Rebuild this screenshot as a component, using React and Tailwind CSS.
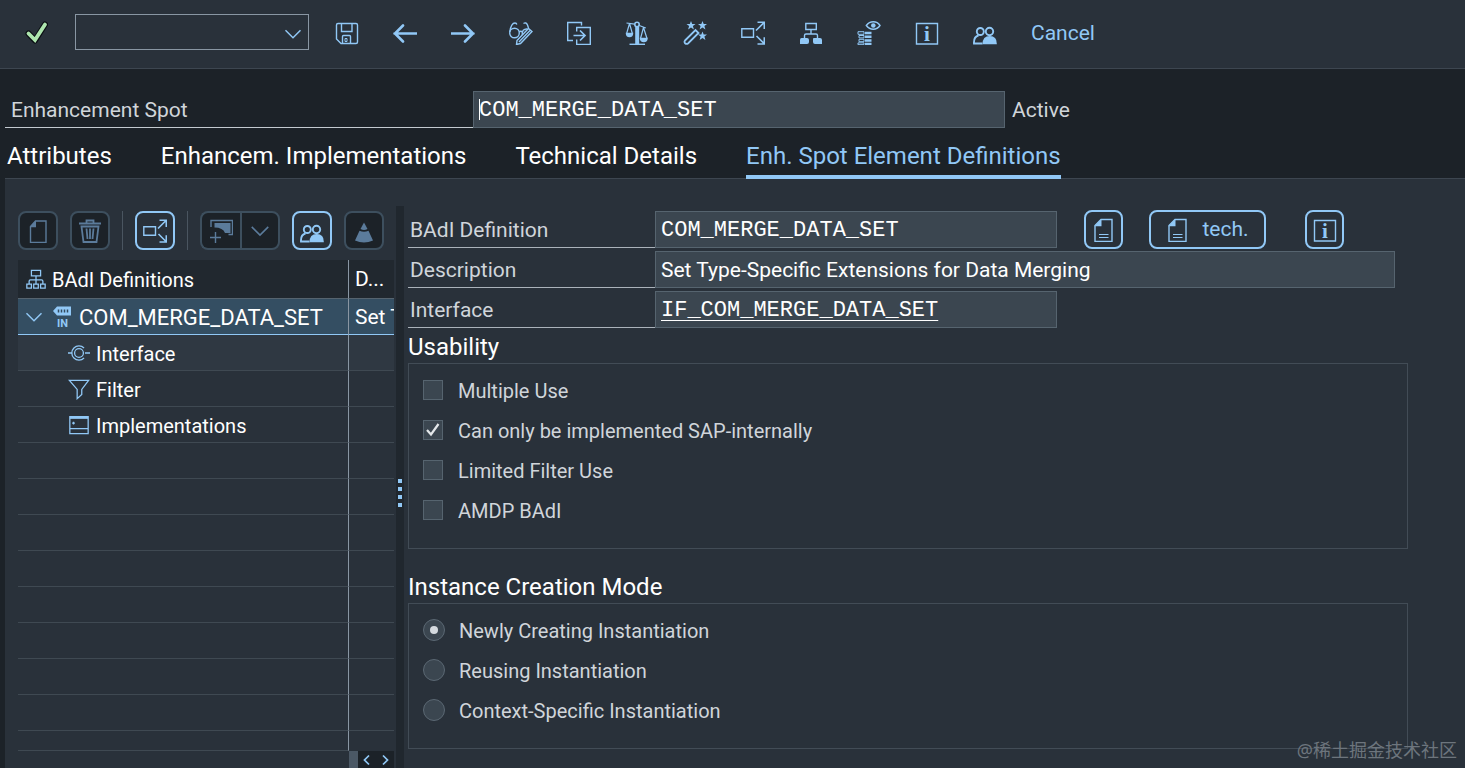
import { useState } from 'react';

const Icon = ({ children, className = 'size-6' }) => (
  <svg
    viewBox="0 0 24 24"
    className={className}
    fill="none"
    stroke="currentColor"
    strokeWidth="1.4"
    aria-hidden="true"
  >
    {children}
  </svg>
);

const SaveIcon = () => (
  <Icon>
    <path d="M3 2.500h18q1.500 0 1.500 1.500v17q0 1.500-1.500 1.500H6L1.500 18V4q0-1.500 1.500-1.500z" />
    <path d="M6.500 2.500v8h10.500v-8M7.500 22.500v-7q0-1 1-1h6q1 0 1 1v7" />
    <path d="M10 17.500h2v3h-2z" strokeWidth="1" />
  </Icon>
);

const BackIcon = () => (
  <Icon>
    <path d="M1.5 12.500h22M10 4.500l-8 8 8 8" strokeWidth="2.600" strokeLinecap="round" />
  </Icon>
);

const ForwardIcon = () => (
  <Icon>
    <path d="M.5 12.500h22M14 4.500l8 8-8 8" strokeWidth="2.600" strokeLinecap="round" />
  </Icon>
);

const GlassesPencilIcon = () => (
  <Icon>
    <circle cx="5.500" cy="12" r="4.800" />
    <path d="M.8 11C1.500 6 3 2 6 2q1.500 0 1.800 1.500M10.300 11q1.500-1.500 3 0M13.300 14C12.500 10 15 7.500 18.500 8M14.500 2.500Q17 .8 18.500 4l1 3" />
    <path d="M8 19.500 19.500 7.500l3.500 3L11.500 22.500 7.500 23.500zM10 21l11-11.500" />
  </Icon>
);

const CopyToIcon = () => (
  <Icon>
    <path d="M6 19.500H.7V1.500h13.800v3M9.700 10.500V6.500h13.600v17H9.700v-5" />
    <path d="M6.500 14.500h11M13 9.500l5 5-5 5" strokeWidth="1.700" />
  </Icon>
);

const ScaleIcon = () => (
  <Icon>
    <path d="M12.200 6v17" strokeWidth="4" />
    <path d="M4.500 23.300h15.500" />
    <circle cx="12" cy="3.500" r="2.200" strokeWidth="1.600" />
    <path d="M1.500 2l8 1.200M14.300 4.500l6.500 2.500M4.500 2.500l-3 10.500M4.500 2.500L7.500 13M18.500 6.500l-3 11M18.500 6.500l3.500 11" strokeWidth="1.200" />
    <path d="M1.500 12.500h6q0 3-3 3t-3-3zM15.500 17.500h6.500q0 3-3.200 3t-3.300-3z" fill="currentColor" />
  </Icon>
);

const WandIcon = () => (
  <Icon>
    <path d="M2 19.500 12.500 9l3 3L5 22.500q-1.500 1-3-.3-1-1.400 0-2.700z" strokeWidth="1.800" />
    <path
      stroke="none"
      fill="currentColor"
      d="M8 0l1.200 3H12.500L9.900 5l1 3.500L8 6.500 5.100 8.500l1-3.500L3.500 3h3.300zM19.500 0l1.200 3H24L21.400 5l1 3.500-2.900-2-2.900 2 1-3.500L15 3h3.300zM19.500 10.500l1.200 3H24l-2.600 2 1 3.500-2.900-2-2.900 2 1-3.500-2.600-2h3.300z"
    />
  </Icon>
);

const ExpandIcon = ({ className }) => (
  <Icon className={className}>
    <path d="M.8 7.700h11.700v8.500H.8z" />
    <path d="M15 9.500l8-8M16.500 1.200h6.800V8M15.500 15l7.500 7.500M16.500 23h6.800v-6.800" strokeWidth="1.600" />
  </Icon>
);

const HierarchyIcon = () => (
  <Icon>
    <path d="M6.800 2.500h10.500v6H6.800zM12 8.500V13M5.500 17v-2.500Q5.500 13 7 13h10q1.500 0 1.500 1.500V17" />
    <path d="M2.500 17H8q2 0 2 2v2q0 2-2 2H1V19q0-2 1.500-2zM14.500 17H21q2 0 2 2v4h-7q-2 0-2-2v-2q0-2 .5-2z" fill="currentColor" stroke="none" />
  </Icon>
);

const WatchIcon = () => (
  <Icon>
    <path d="M9.300 4.500Q12 .8 16.300.8t6.700 3.700Q20.500 8.200 16.300 8.200T9.300 4.500z" />
    <circle cx="16.300" cy="4.500" r="2.300" fill="currentColor" stroke="none" />
    <path d="M8 12h6.500M8 15.800h6.500M8 19.500h6.500M8 23h6.500" strokeWidth="2.600" />
    <path d="M1 10.700h6v2.600H1zM2 14.500h5v2.400H2zM2 18.300h5v2.400H2zM1 21.900h6v1.800H1z" strokeWidth="1" />
  </Icon>
);

const InfoIcon = () => (
  <Icon>
    <path d="M1.500 2.500h21v20.500h-21z" />
    <text
      x="12"
      y="19.500"
      textAnchor="middle"
      fontSize="21"
      fontFamily="Liberation Serif, serif"
      fontWeight="700"
      fill="currentColor"
      stroke="none"
    >
      i
    </text>
  </Icon>
);

const PeopleIcon = () => (
  <Icon>
    <circle cx="7.300" cy="10.500" r="3.500" strokeWidth="1.900" />
    <path d="M9.500 22.500H1Q.6 15.500 5.500 14.500" strokeWidth="1.900" />
    <circle cx="16.500" cy="10.500" r="3.700" strokeWidth="1.900" />
    <path d="M9.500 23.300q0-8.300 7.300-8.300t7 8.300z" fill="currentColor" stroke="none" />
  </Icon>
);

const PageIcon = () => (
  <Icon>
    <path d="M9.500 2H20v21.500H4.500V7.500z" />
    <path d="M3.800 8.200 10 1.500v6.700z" fill="currentColor" stroke="none" />
  </Icon>
);

const DocIcon = () => (
  <Icon>
    <path d="M9 1.500h11v22H3v-16z" />
    <path d="M2.500 8.300 9.500 1v7.300z" fill="currentColor" stroke="none" />
    <path d="M7 16.500h9.500M7 19.500h9.500" strokeWidth="1.200" />
  </Icon>
);

const TrashIcon = () => (
  <Icon>
    <path d="M1 4.500h22M8.500 4V1.500h7V4" strokeWidth="1.800" />
    <path d="M3.500 7.500h17L18.500 23h-13zM8.500 9.500l1 10.500M12 9.500V20M15.500 9.500 14.500 20" strokeWidth="1.800" />
  </Icon>
);

const AddNodeIcon = () => (
  <Icon>
    <path d="M2 8V1.500h21.500V15.500h-4" />
    <path d="M5.500 4h16v10H16Q14 8.500 5.500 8.500z" fill="currentColor" stroke="none" />
    <path d="M6.500 13v11M1 18.500h11" />
  </Icon>
);

const ConeIcon = () => (
  <Icon>
    <path d="M12 3.500 15.500 10q-3.500 1.800-7 0z" fill="currentColor" stroke="none" />
    <path d="M7.500 11.700q4.500 2 9 0L21 21.500Q12 25.500 3 21.500z" fill="currentColor" stroke="none" />
  </Icon>
);

const ChevronDown = ({ className }) => (
  <Icon className={className}>
    <path d="M3 7.500l9 9 9-9" strokeWidth="1.700" />
  </Icon>
);

const TreeIcon = () => (
  <Icon className="size-[22px] text-[#91c8f6]">
    <path d="M7 2.500h10v6H7zM12 8.500V13M4.500 17v-2.500Q4.500 13 6 13h12q1.500 0 1.500 1.500V17M12 13v4M2 17.500h5V22H2zM9.500 17.500h5V22h-5zM17 17.500h5V22h-5z" />
  </Icon>
);

const BadiIcon = () => (
  <svg viewBox="0 0 18 24" className="h-6 w-[18px] overflow-visible text-[#91c8f6]" aria-hidden="true">
    <path d="M0 6 4 1.500h14v9H4z" fill="currentColor" />
    <path d="M5.500 4.500v3M8.500 4.500v3M11.500 4.500v3M14.500 4.500v3" stroke="#33495c" strokeWidth="1.500" />
    <text x="9.500" y="22" textAnchor="middle" fontSize="11" fontWeight="700" fontFamily="Roboto, sans-serif" fill="currentColor">
      IN
    </text>
  </svg>
);

const InterfaceIcon = () => (
  <Icon className="size-[22px] text-[#91c8f6]">
    <path d="M0 12h4.500M18.500 12H24" />
    <circle cx="12" cy="12" r="4.800" />
    <path d="M17.500 6.500A7.800 7.800 0 1 0 17.500 17.500" />
  </Icon>
);

const FilterIcon = () => (
  <Icon className="size-[22px] text-[#91c8f6]">
    <path d="M1.500 2.500h21L15 12.500v5.500l-5 4.500v-10z" />
  </Icon>
);

const WindowIcon = () => (
  <Icon className="size-[22px] text-[#91c8f6]">
    <path d="M2 3h20v18.500H2zM2 16h20M4.500 10h3M6 8.500v3" />
    <path d="M2 4h20" strokeWidth="2.600" />
  </Icon>
);

const toolbar = [
  { label: 'Save', icon: SaveIcon },
  { label: 'Back', icon: BackIcon },
  { label: 'Forward', icon: ForwardIcon },
  { label: 'Display/Change', icon: GlassesPencilIcon },
  { label: 'Other object', icon: CopyToIcon },
  { label: 'Check', icon: ScaleIcon },
  { label: 'Activate', icon: WandIcon },
  { label: 'Where-used list', icon: ExpandIcon },
  { label: 'Object list', icon: HierarchyIcon },
  { label: 'Navigation window', icon: WatchIcon },
  { label: 'Information', icon: InfoIcon },
  { label: 'Implementations', icon: PeopleIcon },
];

const tabs = [
  'Attributes',
  'Enhancem. Implementations',
  'Technical Details',
  'Enh. Spot Element Definitions',
];

const children = [
  { label: 'Interface', icon: InterfaceIcon },
  { label: 'Filter', icon: FilterIcon },
  { label: 'Implementations', icon: WindowIcon },
];

const usability = [
  'Multiple Use',
  'Can only be implemented SAP-internally',
  'Limited Filter Use',
  'AMDP BAdI',
];

const modes = [
  'Newly Creating Instantiation',
  'Reusing Instantiation',
  'Context-Specific Instantiation',
];

const fieldClass =
  'h-[37px] border border-[#56646f] bg-[#3b4650] px-[5px] text-white outline-none';
const monoClass = "pt-0.5 font-['Liberation_Mono',monospace] text-[22px]";
const labelClass = 'flex h-[37px] w-[247px] shrink-0 items-center border-b border-[#aab2ba] pt-1 pl-0.5';
const enabledButton =
  'flex h-[39px] items-center justify-center rounded-lg border-2 border-[#91c8f6] text-[#91c8f6]';
const disabledButton =
  'flex h-[39px] w-10 items-center justify-center border-2 border-[#3d4f5e] bg-[#1c2228] text-[#5b7b9b]';

export default function App() {
  const [tab, setTab] = useState(3);
  const [checked, setChecked] = useState([false, true, false, false]);
  const [mode, setMode] = useState(0);

  const toggle = (i) => setChecked((prev) => prev.map((v, j) => (j === i ? !v : v)));

  return (
    <div className="relative flex min-h-screen flex-col overflow-hidden bg-[#1c2228] font-['Roboto',sans-serif] text-[21px] text-[#d0d5da]">
      {/* Toolbar */}
      <header className="flex h-[69px] items-center border-b border-[#3d4650] bg-[#29313a] pb-0.5 pl-6">
        <button aria-label="Enter" className="size-6">
          <svg viewBox="0 0 24 24" className="size-6" fill="none">
            <path d="M4.500 12.500l6.500 7L21 3.500" stroke="#0a0e12" strokeWidth="6" strokeLinecap="round" strokeLinejoin="round" />
            <path d="M4.500 12.500l6.500 6.500L21 3.500" stroke="#ade5ae" strokeWidth="3.800" strokeLinecap="round" />
          </svg>
        </button>
        <div className="relative ml-[27px] text-[#91c8f6]">
          <select
            aria-label="Command"
            className="-mt-0.5 block h-9 w-[234px] appearance-none border border-[#8996a3] bg-transparent outline-none"
          />
          <ChevronDown className="pointer-events-none absolute top-2 right-1.5 size-5" />
        </div>
        <nav className="ml-[26px] flex items-center gap-[34px] text-[#91c8f6]">
          {toolbar.map(({ label, icon: ItemIcon }) => (
            <button key={label} aria-label={label} className="size-6">
              <ItemIcon />
            </button>
          ))}
          <button className="pt-0.5">Cancel</button>
        </nav>
      </header>

      {/* Object name */}
      <div className="flex px-[5px] pt-[22px]">
        <label htmlFor="spot" className="flex h-[37px] w-[468px] items-center border-b border-[#c3cad0] pt-1 pl-1.5">
          Enhancement Spot
        </label>
        <div className="relative">
          <input id="spot" defaultValue="COM_MERGE_DATA_SET" className={`${fieldClass} ${monoClass} block w-[532px]`} />
          <span className="absolute top-2 left-[6px] h-[21px] w-px bg-white" />
        </div>
        <span className="flex h-[37px] items-center pt-0.5 pl-[7px]">Active</span>
      </div>

      {/* Tabs */}
      <div role="tablist" className="flex h-[51px] gap-[49px] pl-[7px] text-2xl">
        {tabs.map((label, i) => (
          <button
            key={label}
            role="tab"
            aria-selected={tab === i}
            onClick={() => setTab(i)}
            className={
              tab === i
                ? 'z-10 border-b-4 border-[#91c8f6] pt-2 text-[#91c8f6]'
                : 'border-b-4 border-transparent pt-2 text-white'
            }
          >
            {label}
          </button>
        ))}
      </div>

      <main className="-mt-px ml-[5px] flex flex-1 border-t border-[#3d4650] bg-[#29313a]">
        {/* Tree */}
        <section className="flex w-[391px] shrink-0 flex-col pr-0.5 pl-[13px] pt-8">
          <div className="flex h-[39px] items-center gap-3">
            <button disabled aria-label="Create" className={`${disabledButton} rounded-lg`}>
              <PageIcon />
            </button>
            <button disabled aria-label="Delete" className={`${disabledButton} rounded-lg`}>
              <TrashIcon />
            </button>
            <span className="h-[39px] w-px bg-[#4a5560]" />
            <button aria-label="Expand" className={`${enabledButton} w-10`}>
              <ExpandIcon />
            </button>
            <span className="h-[39px] w-px bg-[#4a5560]" />
            <div className="flex">
              <button disabled aria-label="Add" className={`${disabledButton} rounded-l-lg border-r-0`}>
                <AddNodeIcon />
              </button>
              <button disabled aria-label="More" className={`${disabledButton} rounded-r-lg`}>
                <ChevronDown className="size-[22px]" />
              </button>
            </div>
            <button aria-label="Users" className={`${enabledButton} w-10`}>
              <PeopleIcon />
            </button>
            <button disabled aria-label="Filter values" className={`${disabledButton} rounded-lg`}>
              <ConeIcon />
            </button>
          </div>

          <table className="mt-2.5 w-full table-fixed border-separate border-spacing-0 text-left whitespace-nowrap text-white">
            <colgroup>
              <col className="w-[331px]" />
              <col />
            </colgroup>
            <thead>
              <tr className="h-[38px] bg-[#21282f]">
                <th className="border-r border-[#8996a3] p-0 pl-[7px] font-normal">
                  <div className="flex items-center gap-[5px]">
                    <TreeIcon />
                    <span className="pt-0.5 text-xl">BAdI Definitions</span>
                  </div>
                </th>
                <th className="p-0 pt-0.5 pl-[6px] font-normal">D...</th>
              </tr>
            </thead>
            <tbody>
              <tr className="h-[37px] bg-[#344e62]">
                <td className="border-t border-r border-b border-t-[#56646f] border-r-[#8996a3] border-b-[#91c8f6] p-0 pl-1.5">
                  <div className="flex items-center">
                    <button aria-label="Collapse" className="text-[#91c8f6]">
                      <ChevronDown className="size-5" />
                    </button>
                    <span className="mr-2 ml-[9px]">
                      <BadiIcon />
                    </span>
                    <span className="pt-0.5 text-[22px] leading-8">COM_MERGE_DATA_SET</span>
                  </div>
                </td>
                <td className="overflow-hidden border-t border-b border-t-[#56646f] border-b-[#91c8f6] p-0 pt-0.5 pl-[6px]">
                  Set T
                </td>
              </tr>
              {children.map(({ label, icon: ItemIcon }) => (
                <tr key={label} className="h-9 text-xl nth-2:bg-[#2f3842]">
                  <td className="border-r border-b border-r-[#8996a3] border-b-[#3f4952] p-0 pl-[50px]">
                    <div className="flex items-center gap-1.5">
                      <ItemIcon />
                      <span className="pt-0.5">{label}</span>
                    </div>
                  </td>
                  <td className="border-b border-[#3f4952] p-0" />
                </tr>
              ))}
              {Array.from({ length: 8 }, (_, i) => (
                <tr key={i} className="h-9">
                  <td className="border-r border-b border-r-[#8996a3] border-b-[#3f4952] p-0" />
                  <td className="border-b border-[#3f4952] p-0" />
                </tr>
              ))}
              <tr className="h-5">
                <td className="border-r border-b border-r-[#8996a3] border-b-[#3f4952] p-0" />
                <td className="p-0" />
              </tr>
            </tbody>
          </table>
          <div className="flex h-[17px] justify-end">
            <span className="w-[9px] bg-[#4b5865]" />
            <div className="flex w-9 items-center justify-around bg-[#1c2228] text-[#91c8f6]">
              <button aria-label="Scroll left">
                <Icon className="size-3">
                  <path d="M16 3L7 12l9 9" strokeWidth="3.500" />
                </Icon>
              </button>
              <button aria-label="Scroll right">
                <Icon className="size-3">
                  <path d="M8 3l9 9-9 9" strokeWidth="3.500" />
                </Icon>
              </button>
            </div>
          </div>
        </section>

        {/* Splitter */}
        <div className="mt-[27px] flex w-2 shrink-0 flex-col items-center justify-center gap-1 bg-[#20272e] pt-3">
          <span className="size-1 bg-[#91c8f6]" />
          <span className="size-1 bg-[#91c8f6]" />
          <span className="size-1 bg-[#91c8f6]" />
          <span className="size-1 bg-[#91c8f6]" />
        </div>

        {/* Details */}
        <section className="min-w-0 flex-1 pt-8 pr-[57px] pl-1">
          <div className="flex flex-col gap-[3px]">
            <div className="flex">
              <label htmlFor="badi" className={labelClass}>
                BAdI Definition
              </label>
              <input id="badi" defaultValue="COM_MERGE_DATA_SET" className={`${fieldClass} ${monoClass} w-[402px]`} />
              <div className="-my-px flex">
                <button aria-label="Documentation" className={`${enabledButton} ml-[27px] w-[39px]`}>
                  <DocIcon />
                </button>
                <button className={`${enabledButton} ml-[26px] w-[117px] gap-3`}>
                  <DocIcon />
                  tech.
                </button>
                <button aria-label="Information" className={`${enabledButton} ml-[39px] w-[39px]`}>
                  <InfoIcon />
                </button>
              </div>
            </div>
            <div className="flex">
              <label htmlFor="desc" className={labelClass}>
                Description
              </label>
              <input
                id="desc"
                defaultValue="Set Type-Specific Extensions for Data Merging"
                className={`${fieldClass} mr-[13px] min-w-0 flex-1`}
              />
            </div>
            <div className="flex">
              <label htmlFor="intf" className={labelClass}>
                Interface
              </label>
              <input
                id="intf"
                defaultValue="IF_COM_MERGE_DATA_SET"
                className={`${fieldClass} ${monoClass} w-[402px] underline decoration-1 underline-offset-4`}
              />
            </div>
          </div>

          <h2 className="mt-px flex h-[34px] items-center pt-0.5 text-2xl text-white">Usability</h2>
          <div className="flex h-[186px] flex-col gap-5 border border-[#424c56] px-3.5 pt-4 text-xl">
            {usability.map((label, i) => (
              <label key={label} className="flex h-5 items-center gap-[15px]">
                <span className="relative size-5">
                  <input
                    type="checkbox"
                    checked={checked[i]}
                    onChange={() => toggle(i)}
                    className="block size-5 appearance-none border border-[#56646f] bg-[#3b4650]"
                  />
                  {checked[i] && (
                    <svg viewBox="0 0 20 20" className="pointer-events-none absolute inset-0" fill="none" stroke="#e3e7ea" strokeWidth="2.200">
                      <path d="M4 10l4 4.500L15.500 4" />
                    </svg>
                  )}
                </span>
                <span className="pt-0.5">{label}</span>
              </label>
            ))}
          </div>

          <h2 className="mt-5 flex h-[34px] items-center pt-0.5 text-2xl text-white">Instance Creation Mode</h2>
          <div className="flex h-[146px] flex-col gap-[18px] border border-[#424c56] px-3.5 pt-[15px] text-xl">
            {modes.map((label, i) => (
              <label key={label} className="flex h-[22px] items-center gap-3.5">
                <span className="relative size-[22px]">
                  <input
                    type="radio"
                    name="mode"
                    checked={mode === i}
                    onChange={() => setMode(i)}
                    className="block size-[22px] appearance-none rounded-full border border-[#5b6873] bg-[#3b4650]"
                  />
                  {mode === i && (
                    <span className="pointer-events-none absolute inset-[7px] rounded-full bg-[#d5dadf]" />
                  )}
                </span>
                <span className="pt-0.5">{label}</span>
              </label>
            ))}
          </div>
        </section>
      </main>

      <span className="absolute right-2 bottom-1 font-['Noto_Sans','Noto_Sans_CJK_SC',sans-serif] text-lg text-[#6d757d]">
        @稀土掘金技术社区
      </span>
    </div>
  );
}
